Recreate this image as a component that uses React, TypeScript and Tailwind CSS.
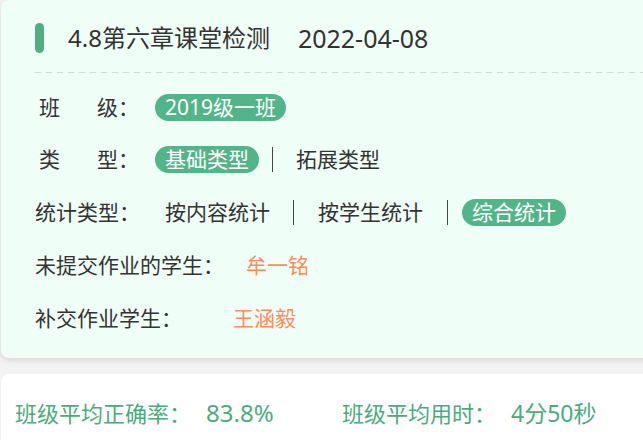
import React from 'react';

const font = { fontFamily: '"Noto Sans", "Noto Sans CJK SC", sans-serif' };

function Pill({ children }: { children: React.ReactNode }) {
  return (
    <span className="inline-flex h-[27px] items-center rounded-full bg-[#52b589] px-[10px] text-[21px] leading-none text-white">
      {children}
    </span>
  );
}

function Bar({ className }: { className: string }) {
  return <span className={`h-[25px] w-px bg-[#444] ${className}`} />;
}

export default function App() {
  return (
    <div className="min-h-screen bg-[#f3f3f3] pl-px text-[#333]" style={font}>
      <div className="w-[680px] rounded-lg bg-[#effff7] pb-[13px] pl-[34px] pt-[23px] shadow-[0_2px_6px_rgba(0,0,0,0.12)]">
        {/* title */}
        <div className="flex h-[30px] items-center">
          <span className="h-[30px] w-[9px] rounded-full bg-[#52ad80]" />
          <span className="ml-[24px] text-[24px] leading-none text-[#333]">4.8第六章课堂检测</span>
          <span className="ml-[28px] text-[25px] leading-none text-[#333]">2022-04-08</span>
        </div>
        <div className="mt-[19px] h-px bg-[repeating-linear-gradient(90deg,#d4d8d6_0_6px,transparent_6px_11px)]" />

        <div className="mt-[8px] text-[21px] leading-none">
          <div className="flex h-[52px] items-center">
            <span className="ml-[4px] w-[58px]">班</span>
            <span className="w-[58px]">级：</span>
            <Pill>2019级一班</Pill>
          </div>
          <div className="flex h-[52px] items-center">
            <span className="ml-[4px] w-[58px]">类</span>
            <span className="w-[58px]">型：</span>
            <Pill>基础类型</Pill>
            <Bar className="ml-[13px]" />
            <span className="ml-[23px]">拓展类型</span>
          </div>
          <div className="flex h-[54px] items-center">
            <span className="w-[130px]">统计类型：</span>
            <span>按内容统计</span>
            <Bar className="ml-[23px] mr-[24px]" />
            <span>按学生统计</span>
            <Bar className="ml-[24px] mr-[14px]" />
            <Pill>综合统计</Pill>
          </div>
          <div className="flex h-[52px] items-center">
            <span className="w-[211px]">未提交作业的学生：</span>
            <span className="text-[#ff8a5c]">牟一铭</span>
          </div>
          <div className="flex h-[54px] items-center">
            <span className="w-[198px]">补交作业学生：</span>
            <span className="text-[#ff8a5c]">王涵毅</span>
          </div>
        </div>
      </div>

      <div className="mt-[16px] flex h-[78px] w-[680px] items-center rounded-lg bg-white pl-[14px] text-[22px] leading-none text-[#4caa7e]">
        <span className="w-[327px]">
          班级平均正确率：<span className="ml-[15px] text-[24px]">83.8%</span>
        </span>
        <span>
          班级平均用时：<span className="ml-[15px] text-[23px]">4分50秒</span>
        </span>
      </div>
    </div>
  );
}
